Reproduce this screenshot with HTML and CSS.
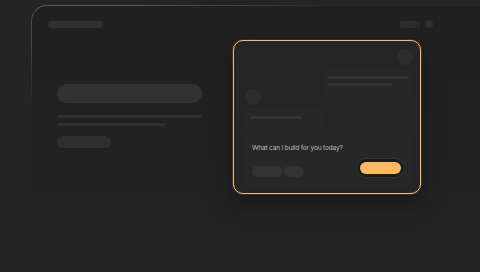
FILE: index.html
```html
<!DOCTYPE html>
<html lang="en">
<head>
    <meta charset="UTF-8">
    <meta name="viewport" content="width=device-width, initial-scale=1.0">
    <title>Builder Preview</title>
    <link rel="stylesheet" href="styles.css">
</head>
<body>

<div class="stage">

    <!-- Background app window -->
    <div class="app-window">
        <div class="app-top">
            <div class="ph ph-title"></div>
            <div class="app-top-right">
                <div class="ph ph-chip"></div>
                <div class="ph-dot"></div>
            </div>
        </div>

        <div class="hero">
            <div class="ph ph-heading"></div>
            <div class="ph ph-line"></div>
            <div class="ph ph-line short"></div>
            <div class="ph ph-btn"></div>
        </div>
    </div>

    <!-- Chat card floating over the window -->
    <div class="chat-card">
        <div class="msg msg-right">
            <div class="avatar"></div>
            <div class="bubble">
                <div class="bubble-line"></div>
                <div class="bubble-line shorter"></div>
            </div>
        </div>

        <div class="msg msg-left">
            <div class="avatar"></div>
            <div class="bubble">
                <div class="bubble-line"></div>
            </div>
        </div>

        <div class="composer">
            <p class="prompt">What can I build for you today?</p>
            <div class="composer-bar">
                <div class="tools">
                    <div class="tool"></div>
                    <div class="tool small"></div>
                </div>
                <div class="send-ring">
                    <div class="send"></div>
                </div>
            </div>
        </div>
    </div>

</div>

</body>
</html>
```

FILE: styles.css
```css
/* Basic Reset */
* {
    margin: 0;
    padding: 0;
    box-sizing: border-box;
}

body {
    font-family: 'Inter', 'Liberation Sans', sans-serif;
    background-color: #242424;
    width: 480px;
    height: 272px;
    overflow: hidden;
}

.stage {
    position: relative;
    width: 480px;
    height: 272px;
    padding: 5px 0 0 31px;
    overflow: hidden;
}

/* Background window */
.app-window {
    width: 449px;
    height: 267px;
    border-radius: 16px 0 0 0;
    background: linear-gradient(180deg, #202020 0%, #222222 60%, #242424 100%);
    border-top: 1px solid #555;
    border-left: 1px solid #4a4a4a;
    position: relative;
    padding: 14px 0 0 16px;
}

.app-window::before {
    content: "";
    position: absolute;
    top: -1px;
    left: 110px;
    right: 0;
    height: 1px;
    background: linear-gradient(90deg, rgba(36, 36, 36, 0) 0%, #262626 60%);
}

.app-window::after {
    content: "";
    position: absolute;
    left: -1px;
    top: 30px;
    bottom: 0;
    width: 1px;
    background: linear-gradient(180deg, rgba(34, 34, 34, 0) 0%, #222 30%);
}

.app-top {
    display: flex;
    justify-content: space-between;
    align-items: center;
    padding-right: 47px;
}

.app-top-right {
    display: flex;
    align-items: center;
    gap: 5px;
}

.ph {
    background-color: #2f2f2f;
    border-radius: 4px;
}

.ph-title {
    width: 55px;
    height: 7px;
    background-color: #303030;
}

.ph-chip {
    width: 20px;
    height: 7px;
    border-radius: 2px;
    background-color: #2c2c2c;
}

.ph-dot {
    width: 8px;
    height: 8px;
    border-radius: 50%;
    background-color: #2e2e2e;
}

.hero {
    width: 145px;
    margin: 56px 0 0 9px;
}

.ph-heading {
    height: 19px;
    border-radius: 10px;
    background-color: #323232;
}

.ph-line {
    height: 3px;
    margin-top: 12px;
    border-radius: 2px;
    background-color: #303030;
}

.ph-line.short {
    width: 108px;
    margin-top: 5px;
}

.ph-btn {
    width: 54px;
    height: 12px;
    margin-top: 10px;
    border-radius: 6px;
    background-color: #2f2f2f;
}

/* Chat card */
.chat-card {
    position: absolute;
    left: 233px;
    top: 40px;
    width: 188px;
    height: 154px;
    border: 1px solid #f2bd78;
    border-radius: 10px;
    background-color: #252525;
    box-shadow: 0 0 0 1px rgba(242, 189, 120, 0.12), 0 10px 24px rgba(0, 0, 0, 0.35);
    padding: 8px 7px 6px 9px;
}

.msg {
    display: flex;
}

.avatar {
    width: 16px;
    height: 16px;
    border-radius: 50%;
    background-color: #2d2d2d;
    flex-shrink: 0;
}

.bubble {
    background-color: #272727;
    border-radius: 4px;
    padding: 6px 5px;
}

.bubble-line {
    height: 3px;
    border-radius: 2px;
    background-color: #333;
}

.bubble-line + .bubble-line {
    margin-top: 4px;
}

.msg-right {
    flex-direction: column;
    align-items: flex-end;
}

.msg-right .bubble {
    width: 91px;
    height: 26px;
    margin-top: 5px;
}

.msg-right .bubble-line.shorter {
    width: 66px;
}

.msg-left {
    flex-direction: column;
    align-items: flex-start;
    margin-top: -7px;
    margin-left: 2px;
}

.msg-left .bubble {
    width: 78px;
    height: 20px;
    margin-top: 3px;
    padding-top: 8px;
}

.msg-left .bubble-line {
    width: 52px;
}

.composer {
    margin-top: 7px;
    height: 52px;
    background-color: #272727;
    border-radius: 6px;
    padding: 9px 9px 0 9px;
}

.prompt {
    font-size: 6.5px;
    color: #bdbdbd;
    letter-spacing: -0.15px;
}

.composer-bar {
    display: flex;
    justify-content: space-between;
    align-items: center;
    margin-top: 7px;
}

.tools {
    display: flex;
    gap: 2px;
    margin-top: 6px;
}

.tool {
    width: 30px;
    height: 11px;
    border-radius: 6px;
    background-color: #333;
}

.tool.small {
    width: 20px;
}

.send-ring {
    padding: 3px;
    border-radius: 10px;
    background-color: #1c1c1c;
    box-shadow: 0 0 0 1px #333;
}

.send {
    width: 41px;
    height: 12px;
    border-radius: 6px;
    background-color: #ffb862;
}
```
